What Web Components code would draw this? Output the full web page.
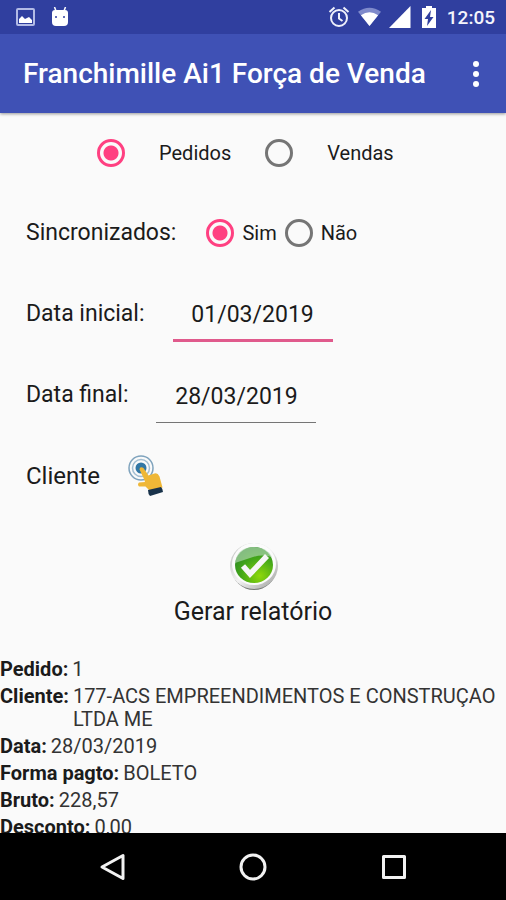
<!DOCTYPE html>
<html lang="pt-BR">
<head>
<meta charset="utf-8">
<meta name="viewport" content="width=device-width, initial-scale=1">
<title>Franchimille Ai1 Força de Venda</title>
<style>
  body {
    margin: 0;
    font-family: Roboto, "Liberation Sans", sans-serif;
    color: #1b1b1b;
    background: #fafafa;
  }
</style>
</head>
<body>
<app-screen>
  <status-bar slot="top" time="12:05"></status-bar>
  <app-bar slot="top">Franchimille Ai1 Força de Venda</app-bar>

  <form-row class="types">
    <radio-group name="tipo" label="Tipo" options="Pedidos,Vendas" wide></radio-group>
  </form-row>
  <form-row>
    <radio-group name="sincronizados" label="Sincronizados:" options="Sim,Não" show-label></radio-group>
  </form-row>
  <form-row>
    <date-field label="Data inicial:" value="01/03/2019" active></date-field>
  </form-row>
  <form-row>
    <date-field label="Data final:" value="28/03/2019"></date-field>
  </form-row>
  <form-row>
    <client-picker>Cliente</client-picker>
  </form-row>
  <report-button>Gerar relatório</report-button>

  <report-list>
    <report-line label="Pedido:">1</report-line>
    <report-line label="Cliente:">177-ACS EMPREENDIMENTOS E CONSTRUÇAO LTDA ME</report-line>
    <report-line label="Data:">28/03/2019</report-line>
    <report-line label="Forma pagto:">BOLETO</report-line>
    <report-line label="Bruto:">228,57</report-line>
    <report-line label="Desconto:">0,00</report-line>
  </report-list>

  <nav-bar slot="bottom"></nav-bar>
</app-screen>

<script>
class AppScreen extends HTMLElement {
  constructor() {
    super();
    this.attachShadow({ mode: "open" });
    this.shadowRoot.innerHTML = `
      <style>
        :host {
          display: flex;
          flex-direction: column;
          height: 100vh;
        }
        header {
          z-index: 1;
          box-shadow: 0 1px 3px rgba(0, 0, 0, 0.4);
        }
        main {
          flex: 1;
          min-height: 0;
          overflow: hidden;
        }
      </style>
      <header><slot name="top"></slot></header>
      <main><slot></slot></main>
      <slot name="bottom"></slot>
    `;
  }
}

class StatusBar extends HTMLElement {
  constructor() {
    super();
    this.attachShadow({ mode: "open" });
    this.shadowRoot.innerHTML = `
      <style>
        :host {
          display: flex;
          align-items: center;
          justify-content: space-between;
          height: 34px;
          padding: 0 11px 0 16px;
          background: #303f9f;
          color: #f4f5fc;
          font-size: 19px;
          font-weight: 500;
        }
        div {
          display: flex;
          align-items: center;
        }
        .left { gap: 16px; }
        .right { gap: 8px; }
        svg { display: block; }
      </style>
      <div class="left">
        <svg width="19" height="18" viewBox="0 0 19 18">
          <rect x="1" y="1" width="17" height="16" rx="1" fill="none" stroke="#b3bbe6" stroke-width="2"/>
          <path d="M3 15v-4l3-3 3 3 4-2 3 3v3z" fill="#fff"/>
        </svg>
        <svg width="18" height="20" viewBox="0 0 18 20">
          <path d="M5 4 3.500 0M13 4 14.500 0" stroke="#fff" stroke-width="1.500"/>
          <path d="M4 3h10q3 0 3 3v9q0 4-4 4H5q-4 0-4-4V6q0-3 3-3z" fill="#fff"/>
          <circle cx="5" cy="10" r="1" fill="#303f9f"/>
          <circle cx="13" cy="10" r="1" fill="#303f9f"/>
        </svg>
      </div>
      <div class="right">
        <svg width="22" height="22" viewBox="0 0 22 22" fill="none" stroke="#eef0fb" stroke-width="2">
          <circle cx="11" cy="12" r="8"/>
          <path d="M11 7v5.500l3.500 2.500M1.500 6 6.500 1.500M20.500 6 15.500 1.500"/>
        </svg>
        <svg width="23" height="20" viewBox="0 0 24 20">
          <path d="M12 19.500 0 4.500Q12-4 24 4.500z" fill="#7f8acb"/>
          <path d="M12 19.500 3 8.200Q12 2 21 8.200z" fill="#fff"/>
        </svg>
        <svg width="22" height="22" viewBox="0 0 22 22">
          <path d="M21.500 0v22H0z" fill="#fff"/>
        </svg>
        <svg width="20" height="22" viewBox="1 0 20 22">
          <path d="M8 0h6v2h4v20H4V2h4z" fill="#fff"/>
          <path d="M13 4 6.500 13H10l-1 7 6.500-9H12z" fill="#303f9f"/>
        </svg>
        <time></time>
      </div>
    `;
  }

  connectedCallback() {
    this.shadowRoot.querySelector("time").textContent = this.getAttribute("time");
  }
}

class AppBar extends HTMLElement {
  constructor() {
    super();
    this.attachShadow({ mode: "open" });
    this.shadowRoot.innerHTML = `
      <style>
        :host {
          display: flex;
          align-items: center;
          justify-content: space-between;
          height: 79px;
          padding: 1px 18px 0 23px;
          box-sizing: border-box;
          background: #3f51b5;
          color: #fff;
        }
        h1 {
          margin: 0;
          font-size: 28px;
          font-weight: 500;
          line-height: 32px;
          white-space: nowrap;
        }
        button {
          display: block;
          padding: 0;
          border: 0;
          background: none;
        }
        svg { display: block; }
      </style>
      <h1><slot></slot></h1>
      <button type="button" aria-label="Mais opções">
        <svg width="24" height="28" viewBox="0 0 24 28" fill="#fff">
          <circle cx="12" cy="4" r="3"/>
          <circle cx="12" cy="14" r="3"/>
          <circle cx="12" cy="24" r="3"/>
        </svg>
      </button>
    `;
  }
}

class FormRow extends HTMLElement {
  constructor() {
    super();
    this.attachShadow({ mode: "open" });
    this.shadowRoot.innerHTML = `
      <style>
        :host {
          display: flex;
          align-items: center;
          height: 81px;
          padding-left: 26px;
          font-size: 23px;
        }
        :host(.types) {
          height: 79px;
          padding-left: 97px;
        }
      </style>
      <slot></slot>
    `;
  }
}

class RadioGroup extends HTMLElement {
  constructor() {
    super();
    this.attachShadow({ mode: "open" });
    this.shadowRoot.innerHTML = `
      <style>
        :host { display: block; }
        [role="radiogroup"] {
          display: flex;
          align-items: center;
          gap: 8px;
        }
        .title { margin-right: 22px; }
        label {
          display: flex;
          align-items: center;
          gap: 8px;
          font-size: 20px;
        }
        :host([wide]) [role="radiogroup"],
        :host([wide]) label { gap: 34px; }
        input {
          appearance: none;
          width: 28px;
          height: 28px;
          margin: 0;
          border: 3px solid #757575;
          border-radius: 50%;
        }
        input:checked {
          border-color: #ff4081;
          background: radial-gradient(circle, #ff4081 7px, transparent 8px);
        }
      </style>
      <div role="radiogroup"></div>
    `;
  }

  connectedCallback() {
    const group = this.shadowRoot.querySelector("div");
    group.setAttribute("aria-label", this.getAttribute("label"));
    if (this.hasAttribute("show-label")) {
      const title = document.createElement("span");
      title.className = "title";
      title.textContent = this.getAttribute("label");
      group.appendChild(title);
    }
    this.getAttribute("options").split(",").forEach((text, i) => {
      const label = document.createElement("label");
      const input = document.createElement("input");
      input.type = "radio";
      input.name = this.getAttribute("name");
      input.value = text;
      input.checked = i === 0;
      label.append(input, text);
      group.appendChild(label);
    });
  }
}

class DateField extends HTMLElement {
  constructor() {
    super();
    this.attachShadow({ mode: "open" });
    this.shadowRoot.innerHTML = `
      <style>
        :host {
          display: flex;
          align-items: center;
          gap: 28px;
        }
        input {
          width: 160px;
          height: 57px;
          padding: 4px 0 0;
          box-sizing: border-box;
          border: 0;
          border-bottom: 1px solid #757575;
          outline: none;
          background: none;
          color: inherit;
          font: inherit;
          text-align: center;
        }
        :host([active]) input { border-bottom: 3px solid #e05a8c; }
      </style>
      <label for="date"></label>
      <input id="date" type="text">
    `;
  }

  connectedCallback() {
    this.shadowRoot.querySelector("label").textContent = this.getAttribute("label");
    this.shadowRoot.querySelector("input").value = this.getAttribute("value");
  }
}

class ClientPicker extends HTMLElement {
  constructor() {
    super();
    this.attachShadow({ mode: "open" });
    this.shadowRoot.innerHTML = `
      <style>
        :host {
          display: flex;
          align-items: center;
          gap: 28px;
          font-size: 24px;
        }
        button {
          padding: 0;
          border: 0;
          background: none;
        }
        svg { display: block; }
      </style>
      <span><slot></slot></span>
      <button type="button" aria-label="Escolher cliente">
        <svg width="36" height="42" viewBox="0 0 36 42">
          <g fill="none" stroke="#7fa3bd">
            <circle cx="13" cy="13" r="12" stroke-width="1.500"/>
            <circle cx="13" cy="13" r="8.500" stroke="#a4bfd2" stroke-width="1.500"/>
          </g>
          <circle cx="13" cy="13" r="5.500" fill="#3277a5"/>
          <path d="M11.500 14.500q0-3 3-2 1 0 2 2l4 6 6-2q3-1 5 3l3 11-13 3-4-4H11q-2-2 0-4l6-.5-1-3z" fill="#efb737"/>
          <path d="m20 35 13-3q2 2 2 5l-13 4q-2-2-2-6z" fill="#18324a"/>
        </svg>
      </button>
    `;
  }
}

class ReportButton extends HTMLElement {
  constructor() {
    super();
    this.attachShadow({ mode: "open" });
    this.shadowRoot.innerHTML = `
      <style>
        :host {
          display: flex;
          justify-content: center;
          padding: 26px 0 31px;
        }
        button {
          display: flex;
          flex-direction: column;
          align-items: center;
          gap: 5px;
          padding: 0;
          border: 0;
          background: none;
          color: inherit;
          font: inherit;
          font-size: 25px;
          line-height: 30px;
        }
      </style>
      <button type="button">
        <svg width="50" height="50" viewBox="0 0 50 50">
          <defs>
            <linearGradient id="rim" x1="0" y1="0" x2="1" y2="1">
              <stop offset="0.1" stop-color="#c4c6c4"/>
              <stop offset="0.5" stop-color="#f3f3f3"/>
              <stop offset="1" stop-color="#9a9c9a"/>
            </linearGradient>
            <radialGradient id="green" cx="0.65" cy="0.8" r="0.8">
              <stop offset="0" stop-color="#8ed80a"/>
              <stop offset="0.6" stop-color="#45a818"/>
              <stop offset="1" stop-color="#2c8a22"/>
            </radialGradient>
          </defs>
          <ellipse cx="26" cy="27" rx="22" ry="21" fill="#777a77"/>
          <ellipse cx="26" cy="24" rx="24" ry="23" fill="url(#rim)"/>
          <ellipse cx="26" cy="22" rx="22" ry="21" fill="#fbfbfb"/>
          <ellipse cx="26" cy="23" rx="19" ry="18" fill="url(#green)"/>
          <path d="M7 21Q9 5 26 5q13 0 18 10-10-3-19 0T7 21z" fill="#b4d8b4" opacity="0.65"/>
          <path d="m15 24 7 8 17-18" fill="none" stroke="#f6f6f6" stroke-width="5.500"/>
        </svg>
        <slot></slot>
      </button>
    `;
  }
}

class ReportList extends HTMLElement {
  constructor() {
    super();
    this.attachShadow({ mode: "open" });
    this.shadowRoot.innerHTML = `
      <style>
        :host {
          display: flex;
          flex-direction: column;
          gap: 4px;
          font-size: 20px;
          line-height: 23px;
        }
      </style>
      <slot></slot>
    `;
  }
}

class ReportLine extends HTMLElement {
  constructor() {
    super();
    this.attachShadow({ mode: "open" });
    this.shadowRoot.innerHTML = `
      <style>
        :host {
          display: flex;
          gap: 4px;
        }
        b { white-space: nowrap; }
        span { color: #333; }
      </style>
      <b></b>
      <span><slot></slot></span>
    `;
  }

  connectedCallback() {
    this.shadowRoot.querySelector("b").textContent = this.getAttribute("label");
  }
}

class NavBar extends HTMLElement {
  constructor() {
    super();
    this.attachShadow({ mode: "open" });
    this.shadowRoot.innerHTML = `
      <style>
        :host {
          display: flex;
          align-items: center;
          justify-content: center;
          gap: 113px;
          height: 67px;
          background: #000;
        }
        button {
          padding: 0;
          border: 0;
          background: none;
        }
        svg {
          display: block;
          fill: none;
          stroke: #f2f2f2;
          stroke-width: 3;
          stroke-linejoin: round;
        }
      </style>
      <button type="button" aria-label="Voltar">
        <svg width="28" height="28" viewBox="0 0 28 28"><path d="M25 2.500v23L4 14z"/></svg>
      </button>
      <button type="button" aria-label="Início">
        <svg width="28" height="28" viewBox="0 0 28 28"><circle cx="14" cy="14" r="12"/></svg>
      </button>
      <button type="button" aria-label="Recentes">
        <svg width="28" height="28" viewBox="0 0 28 28"><rect x="3.500" y="3.500" width="21" height="21"/></svg>
      </button>
    `;
  }
}

customElements.define("app-screen", AppScreen);
customElements.define("status-bar", StatusBar);
customElements.define("app-bar", AppBar);
customElements.define("form-row", FormRow);
customElements.define("radio-group", RadioGroup);
customElements.define("date-field", DateField);
customElements.define("client-picker", ClientPicker);
customElements.define("report-button", ReportButton);
customElements.define("report-list", ReportList);
customElements.define("report-line", ReportLine);
customElements.define("nav-bar", NavBar);
</script>
</body>
</html>
